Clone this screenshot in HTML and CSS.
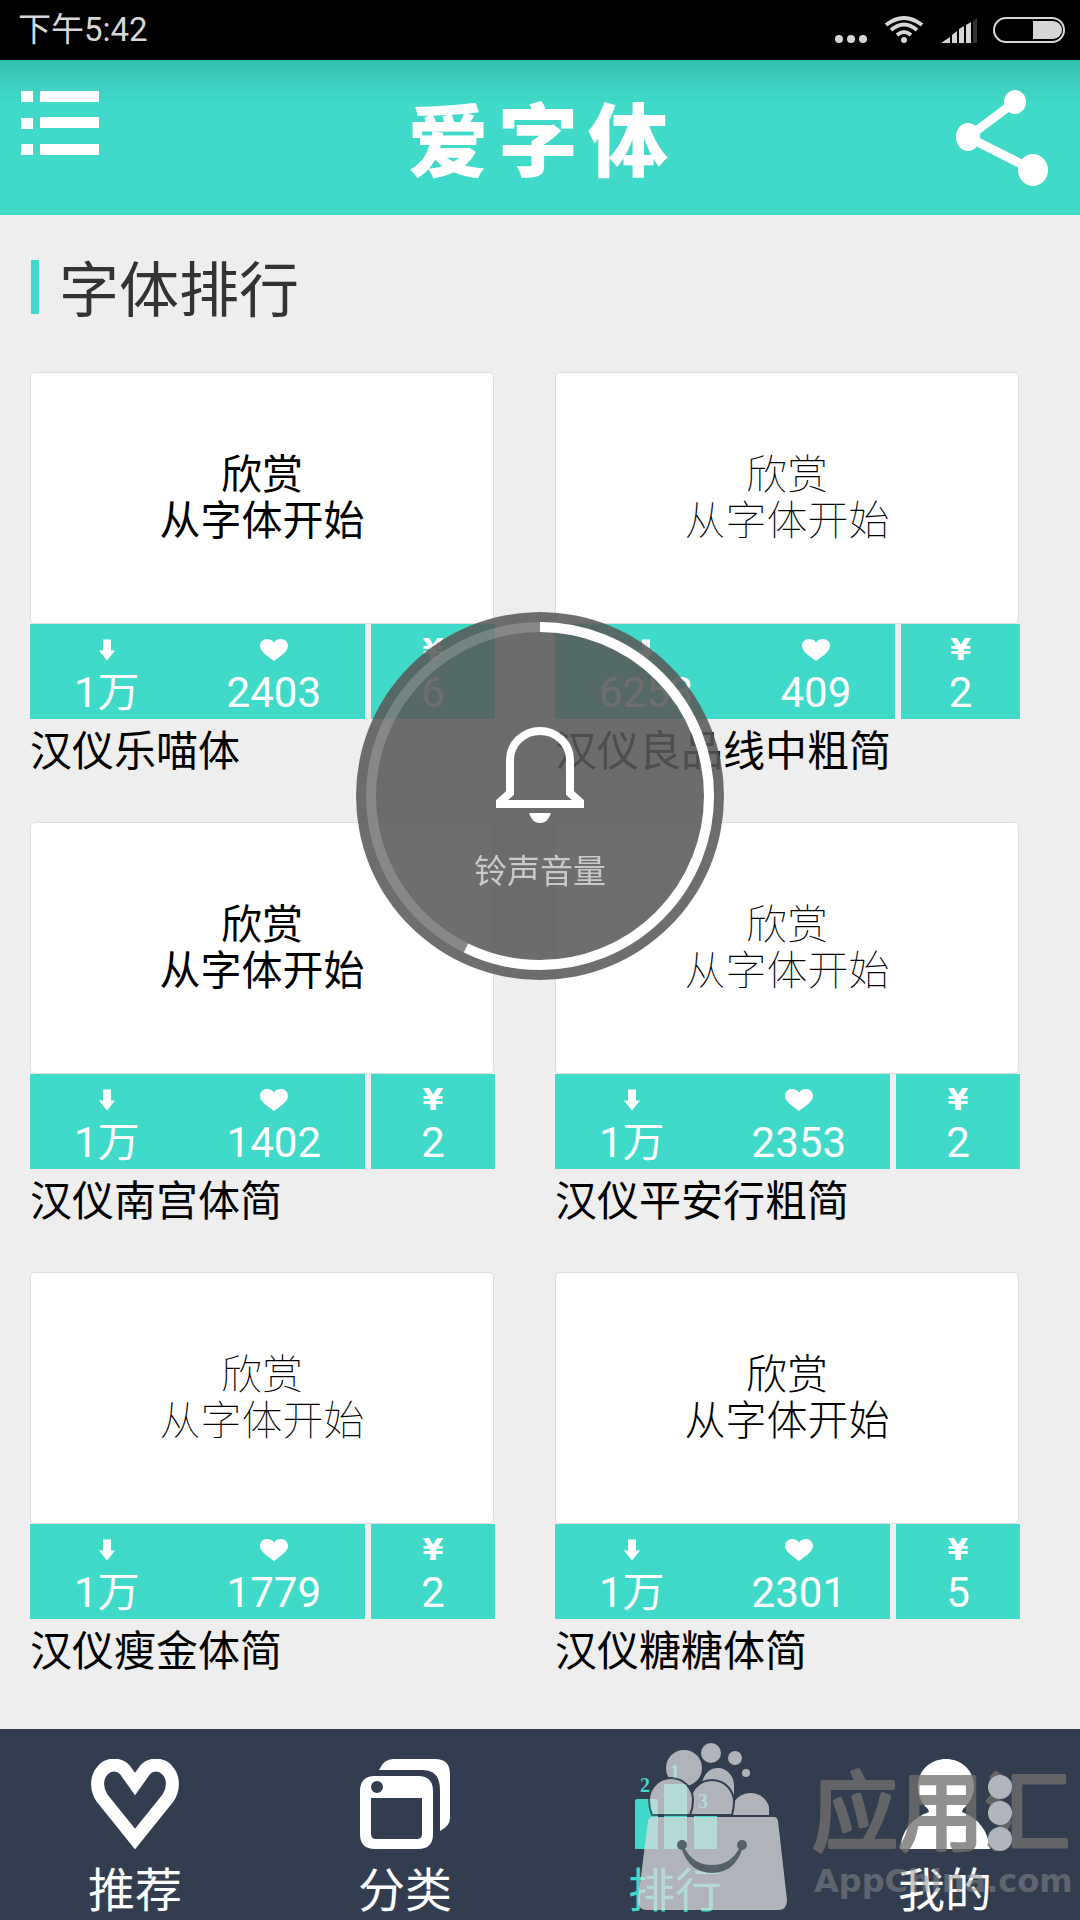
FILE: index.html
```html
<!DOCTYPE html>
<html lang="zh-CN">

<head>
    <meta charset="utf-8">
    <meta name="viewport" content="width=device-width, initial-scale=1.0">
    <title>爱字体</title>
    <link rel="stylesheet" href="styles.css">
</head>

<body>
    <svg class="symbols" aria-hidden="true">
        <symbol id="down" viewBox="0 0 16 21">
            <path d="M4 0h8v11h4l-8 10-8-10h4z" />
        </symbol>
        <symbol id="heart" viewBox="0 0 28 22">
            <path d="M14 22C9 18 0 13 0 7 0 3 3 0 7 0c3 0 6 1 7 4 1-3 4-4 7-4 4 0 7 3 7 7 0 6-9 11-14 15z" />
        </symbol>
    </svg>

    <div class="status">
        <time>下午5:42</time>
        <svg class="status-icons" viewBox="0 0 232 30" aria-hidden="true">
            <g fill="#d6d6d6">
                <circle cx="4" cy="24" r="4" />
                <circle cx="16" cy="24" r="4" />
                <circle cx="28" cy="24" r="4" />
                <circle cx="69" cy="25" r="3" />
                <path d="M106 28l9-6v6zM117 28v-8l5-4v12zM124 28V14l5-3v17zM131 28V10l5-3v21z" />
                <path d="M198 6h20a9 9 0 0 1 9 9 9 9 0 0 1-9 9h-20z" />
            </g>
            <path d="M138 28V6l4-3v25z" fill="#333" />
            <g fill="none" stroke="#d6d6d6">
                <path d="M51 10q18-14 36 0M56 15q13-11 26 0M62 20q7-6 14 0" stroke-width="4" />
                <rect x="159" y="3" width="70" height="24" rx="12" stroke-width="2" />
            </g>
        </svg>
    </div>

    <header>
        <button class="icon-btn" aria-label="菜单">
            <svg class="menu-icon" viewBox="0 0 78 65">
                <path d="M0 1h12v11H0zM19 1h59v11H19zM0 28h12v11H0zM19 27h59v11H19zM0 54h12v11H0zM19 54h59v11H19z" fill="#fff" />
            </svg>
        </button>
        <h1><span>爱</span><span>字</span><span>体</span></h1>
        <button class="icon-btn" aria-label="分享">
            <svg class="share-icon" viewBox="0 0 94 98">
                <path d="M60 12L13 47l65 33" fill="none" stroke="#fff" stroke-width="9" />
                <g fill="#fff">
                    <ellipse cx="60" cy="12" rx="11" ry="12" />
                    <ellipse cx="13" cy="47" rx="12" ry="14" />
                    <ellipse cx="78" cy="80" rx="15" ry="16" />
                </g>
            </svg>
        </button>
    </header>

    <main>
        <h2>字体排行</h2>
        <section class="fonts">
            <article>
                <div class="sample">欣赏<br>从字体开始</div>
                <div class="info">
                    <div class="counts">
                        <p><svg class="down"><use href="#down" /></svg>1万</p>
                        <p><svg class="heart"><use href="#heart" /></svg>2403</p>
                    </div>
                    <p class="price"><b>¥</b>6</p>
                </div>
                <h3>汉仪乐喵体</h3>
            </article>
            <article>
                <div class="sample thin">欣赏<br>从字体开始</div>
                <div class="info">
                    <div class="counts">
                        <p><svg class="down"><use href="#down" /></svg>6253</p>
                        <p><svg class="heart"><use href="#heart" /></svg>409</p>
                    </div>
                    <p class="price"><b>¥</b>2</p>
                </div>
                <h3>汉仪良品线中粗简</h3>
            </article>
            <article>
                <div class="sample">欣赏<br>从字体开始</div>
                <div class="info">
                    <div class="counts">
                        <p><svg class="down"><use href="#down" /></svg>1万</p>
                        <p><svg class="heart"><use href="#heart" /></svg>1402</p>
                    </div>
                    <p class="price"><b>¥</b>2</p>
                </div>
                <h3>汉仪南宫体简</h3>
            </article>
            <article>
                <div class="sample thin">欣赏<br>从字体开始</div>
                <div class="info">
                    <div class="counts">
                        <p><svg class="down"><use href="#down" /></svg>1万</p>
                        <p><svg class="heart"><use href="#heart" /></svg>2353</p>
                    </div>
                    <p class="price"><b>¥</b>2</p>
                </div>
                <h3>汉仪平安行粗简</h3>
            </article>
            <article>
                <div class="sample thin">欣赏<br>从字体开始</div>
                <div class="info">
                    <div class="counts">
                        <p><svg class="down"><use href="#down" /></svg>1万</p>
                        <p><svg class="heart"><use href="#heart" /></svg>1779</p>
                    </div>
                    <p class="price"><b>¥</b>2</p>
                </div>
                <h3>汉仪瘦金体简</h3>
            </article>
            <article>
                <div class="sample light">欣赏<br>从字体开始</div>
                <div class="info">
                    <div class="counts">
                        <p><svg class="down"><use href="#down" /></svg>1万</p>
                        <p><svg class="heart"><use href="#heart" /></svg>2301</p>
                    </div>
                    <p class="price"><b>¥</b>5</p>
                </div>
                <h3>汉仪糖糖体简</h3>
            </article>
        </section>
    </main>

    <nav>
        <a href="#tuijian">
            <svg viewBox="0 0 90 90">
                <path d="M45 25L35 11C29 4 18 5 13 11 6 18 6 30 12 39l33 41 33-41c6-9 6-21-1-28C72 5 61 4 55 11z" fill="none" stroke="#fff" stroke-width="13" />
            </svg>
            推荐
        </a>
        <a href="#fenlei">
            <svg viewBox="0 0 90 90">
                <path d="M19 11Q24 0 33 0h42q15 0 15 15v44q0 8-10 13V31q0-20-17-20z" fill="#fff" />
                <path fill-rule="evenodd" d="M15 17h43q15 0 15 15v43q0 15-15 15H15Q0 90 0 75V32q0-15 15-15zM11 39v36q0 5 5 5h41q5 0 5-5V39zM17 22a6 6 0 1 0 0 12 6 6 0 1 0 0-12z" fill="#fff" />
            </svg>
            分类
        </a>
        <a href="#paihang" class="valgt">
            <svg viewBox="0 0 90 90">
                <path d="M5 42q0-2 2-2h19q2 0 2 2v48H5zM34 25h23v65H34zM64 57h23v33H64z" fill="#3fdac9" />
                <g class="rank">
                    <text x="10" y="33">2</text>
                    <text x="40" y="20">1</text>
                    <text x="68" y="49">3</text>
                </g>
            </svg>
            排行
        </a>
        <a href="#wode">
            <svg viewBox="0 0 90 90">
                <path d="M46 0c16 0 28 12 28 27 0 9-4 17-11 23l-1 3c16 6 26 18 28 37H0c2-19 12-31 29-37l-1-3c-7-6-10-14-10-23C18 12 30 0 46 0z" fill="#fff" />
            </svg>
            我的
        </a>

        <svg class="watermark" viewBox="0 0 460 180">
            <g class="bag">
                <circle cx="91" cy="13" r="10" />
                <circle cx="115" cy="18" r="7" />
                <circle cx="126" cy="33" r="4" />
                <circle cx="64" cy="28" r="18" />
                <path d="M82 44a16 18 0 0 1 32 4v20H90z" />
                <path d="M112 75V67a19 18 0 0 1 37 0v8z" />
                <path d="M70 75V62a22 22 0 0 1 44 0q0 6-2 13z" class="edge" />
                <path d="M32 75q-3-7-3-15a22 22 0 0 1 44 0q0 8-3 15z" class="edge" />
                <path d="M32 77h122q3 0 4 4l9 79q0 10-9 10H27q-9 0-9-10l10-79q1-4 4-4z" />
            </g>
            <g fill="#566068">
                <circle cx="62" cy="105" r="5" />
                <circle cx="122" cy="105" r="5" />
                <path d="M61 107q8 26 31 26t31-26h-3q-9 18-28 18t-28-18z" />
            </g>
            <text x="192" y="104" class="brand">应用汇</text>
            <g fill="#b0b4bc">
                <circle cx="380" cy="47" r="12" />
                <circle cx="380" cy="73" r="12" />
                <circle cx="380" cy="99" r="12" />
            </g>
            <text x="194" y="152" class="site">AppChina.com</text>
        </svg>
    </nav>

    <div class="volume" role="status">
        <svg class="ring" viewBox="0 0 368 368">
            <circle cx="184" cy="184" r="169" class="track" />
            <circle cx="184" cy="184" r="169" pathLength="360" class="level" />
        </svg>
        <svg class="bell" viewBox="0 0 88 96">
            <path d="M14 33a30 29 0 0 1 60 0v33l10 9v2H4v-2l10-9z" fill="none" stroke="#fff" stroke-width="8" />
            <path d="M33 86h22q-3 10-11 10t-11-10z" fill="#fff" />
        </svg>
        <p>铃声音量</p>
    </div>
</body>

</html>
```
FILE: styles.css
```css
* {
    box-sizing: border-box;
}

body {
    display: flex;
    flex-direction: column;
    min-height: 100vh;
    margin: 0;
    background: #eee;
    font-family: Roboto, "Noto Sans CJK SC", sans-serif;
}

h1,
h2,
h3,
p {
    margin: 0;
    font-weight: 400;
}

svg {
    display: block;
}

.symbols {
    display: none;
}

.status {
    display: flex;
    align-items: center;
    justify-content: space-between;
    height: 60px;
    padding: 0 13px 0 18px;
    background: #000;
    color: #d6d6d6;
    font-size: 33px;
}

.status time {
    padding-bottom: 7px;
}

.status-icons {
    width: 232px;
    height: 30px;
}

header {
    display: flex;
    align-items: flex-start;
    justify-content: space-between;
    height: 155px;
    padding: 30px 31px 0 21px;
    background: linear-gradient(#2fbfad, #3dcdbc 18px, #3fdac9 44px);
}

.icon-btn {
    width: 94px;
    padding: 0;
    border: 0;
    background: none;
    cursor: pointer;
}

.menu-icon {
    width: 78px;
    height: 65px;
}

.share-icon {
    width: 94px;
    height: 98px;
}

h1 {
    display: flex;
    gap: 10px;
    padding-left: 6px;
    color: #fff;
    font-size: 80px;
    font-weight: 900;
    line-height: 106px;
}

main {
    flex: 1;
    padding: 45px 60px 45px 30px;
}

h2 {
    display: flex;
    gap: 20px;
    height: 54px;
    color: #333;
    font-size: 60px;
    line-height: 64px;
}

h2::before {
    content: "";
    width: 8px;
    margin-left: 1px;
    background: #3fdac9;
}

.fonts {
    display: grid;
    grid-template-columns: 1fr 1fr;
    gap: 38px 60px;
    margin-top: 58px;
}

.sample {
    display: flex;
    align-items: center;
    justify-content: center;
    height: 252px;
    margin-right: 1px;
    border: 1px solid #ddd;
    border-radius: 5px;
    background: #fff;
    color: #000;
    font-size: 41px;
    line-height: 46px;
    text-align: center;
}

.light {
    font-weight: 300;
}

.thin {
    font-weight: 100;
}

.info {
    display: flex;
    gap: 6px;
    height: 95px;
    color: #fff;
    font-size: 42px;
    line-height: 50px;
    text-align: center;
}

.counts {
    display: flex;
    gap: 87px;
    padding: 0 44px;
    background: #3fdac9;
}

.info svg {
    height: 22px;
    margin: 15px auto 7px;
    fill: #fff;
}

.info .down {
    width: 16px;
}

.info .heart {
    width: 28px;
}

.price {
    flex: 1;
    padding-top: 8px;
    background: #3fdac9;
}

.price b {
    display: block;
    font: bold 30px/36px "DejaVu Sans", sans-serif;
}

h3 {
    color: #000;
    font-size: 42px;
    line-height: 65px;
}

nav {
    position: relative;
    display: flex;
    height: 191px;
    background: #323e50;
}

nav a {
    flex: 1;
    display: flex;
    flex-direction: column;
    align-items: center;
    gap: 13px;
    padding-top: 30px;
    color: #fff;
    font-size: 47px;
    line-height: 58px;
    text-decoration: none;
}

nav a svg {
    width: 90px;
    height: 90px;
}

nav .valgt {
    color: #3fdac9;
}

.rank {
    fill: #3fdac9;
    font: bold 20px "Liberation Serif", serif;
}

.watermark {
    position: absolute;
    right: 0;
    bottom: 0;
    width: 460px;
    height: 180px;
    pointer-events: none;
}

.bag {
    fill: #dbdbde;
    opacity: 0.75;
}

.edge {
    stroke: #323e50;
    stroke-width: 2;
}

.brand {
    fill: #72706e;
    stroke: #72706e;
    stroke-width: 4;
    stroke-linejoin: round;
    font-size: 86px;
    opacity: 0.77;
}

.site {
    fill: #8c8c8c;
    font: bold 32px "DejaVu Sans", sans-serif;
    opacity: 0.5;
}

.volume {
    position: fixed;
    top: 612px;
    left: 50%;
    display: flex;
    flex-direction: column;
    align-items: center;
    width: 368px;
    height: 368px;
    margin-left: -184px;
    padding-top: 115px;
    border-radius: 50%;
    background: rgba(88, 88, 88, 0.87);
    color: #c8c8c8;
    font-size: 33px;
    line-height: 40px;
}

.ring {
    position: absolute;
    top: 0;
    left: 0;
    width: 368px;
    height: 368px;
    fill: none;
    stroke: #fff;
    stroke-width: 10;
}

.track {
    stroke-opacity: 0.18;
}

.level {
    stroke-dasharray: 206 360;
    transform: rotate(-90deg);
    transform-origin: center;
}

.bell {
    width: 88px;
    height: 96px;
    margin-bottom: 29px;
}
```
